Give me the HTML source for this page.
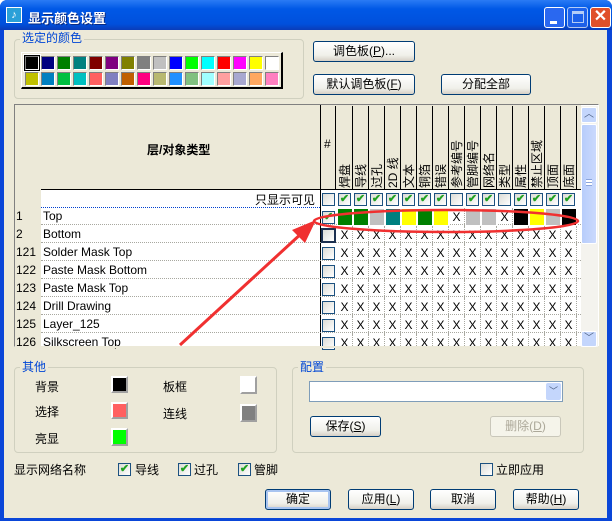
<!DOCTYPE html>
<html><head><meta charset="utf-8"><style>
*{margin:0;padding:0;box-sizing:border-box}
body{width:614px;height:523px;overflow:hidden;background:#fff;font-family:"Liberation Sans","Noto Sans CJK SC",sans-serif;font-size:12px;color:#000;position:relative;white-space:nowrap}
.a{position:absolute}
.win{left:0;top:0;width:612px;height:521px;background:#0a46d8;border-radius:7px 7px 0 0}
.title{left:0;top:0;width:612px;height:30px;background:linear-gradient(#2a7bf5,#0058e6 30%,#0050dc 80%,#0a3cb8);border-radius:7px 7px 0 0}
.client{left:4px;top:30px;width:603px;height:488px;background:#ece9d8}
.grp{border:1px solid #d0d0bf;border-radius:4px}
.glab{background:#ece9d8;color:#0046d5;padding:0 2px;font-size:12px;line-height:13px}
.btn{border:1px solid #003c74;border-radius:3px;background:linear-gradient(#fff,#f0f0ea 70%,#d6d0c5);text-align:center;line-height:18px;font-size:12px}
.sw{width:14px;height:14px;border:1px solid #808080;border-right-color:#fff;border-bottom-color:#fff}
.row{position:absolute;left:41px;height:18px;border-bottom:1px dotted #a8a8a0;width:540px}
.n{position:absolute;left:16px;font-size:12px;line-height:18px}
.t{position:absolute;left:43px;font-size:12px;line-height:18px}
.cb{position:absolute;width:13px;height:13px;border:1px solid #1c5180;background:linear-gradient(135deg,#dcdcd6,#fff);font-size:11px;color:#21a121;line-height:11px;text-align:center;font-weight:bold}
.cells{position:absolute;left:337px;display:flex}
.cells span{width:16px;height:18px;border-right:1px dotted #a8a8a0;text-align:center;line-height:18px;font-size:12px}
.vh{position:absolute;top:106px;width:16px;height:84px;border-right:1px solid #000}
.vh span{position:absolute;left:50%;bottom:2px;transform-origin:0 100%;transform:rotate(-90deg) translate(0,6px);white-space:nowrap;font-size:12px;line-height:12px}
</style></head><body>
<div class="a win"></div>
<div class="a title"></div>
<div class="a" style="left:6px;top:7px;width:16px;height:16px;background:#2aa0d8;border:1px solid #fff;color:#fff;font-size:11px;line-height:14px;text-align:center;font-weight:bold">♪</div>
<div class="a" style="left:28px;top:8px;color:#fff;font-size:13px;font-weight:bold;text-shadow:1px 1px #0a2a80">显示颜色设置</div>
<div class="a" style="left:544px;top:7px;width:21px;height:21px;border:1px solid #fff;border-radius:3px;background:#2a68f0"><div class="a" style="left:5px;top:13px;width:7px;height:3px;background:#fff"></div></div>
<div class="a" style="left:567px;top:7px;width:21px;height:21px;border:1px solid #fff;border-radius:3px;background:#2a68f0;opacity:.7"><div class="a" style="left:4px;top:3px;width:12px;height:12px;border:1px solid #fff;border-top-width:3px"></div></div>
<div class="a" style="left:590px;top:7px;width:21px;height:21px;border:1px solid #fff;border-radius:3px;background:#e0502a;color:#fff;font-size:16px;line-height:18px;text-align:center;font-weight:bold">✕</div>
<div class="a client"></div>

<div class="a grp" style="left:14px;top:39px;width:290px;height:60px"></div>
<div class="a glab" style="left:20px;top:32px">选定的颜色</div>
<div class="a" style="left:21px;top:52px;width:262px;height:37px;background:#ece9d8;border:1px solid #fff;border-right:2px solid #000;border-bottom:2px solid #000"></div>
<div class="a" style="left:24px;top:55px;width:16px;height:16px;border:1px solid #000;background:#000;outline:1px solid #fff"></div>
<div class="a" style="left:25px;top:56px;display:grid;grid-template-columns:repeat(16,14px);column-gap:2px;row-gap:2px">
<div class="sw" style="background:#000"></div><div class="sw" style="background:#000080"></div><div class="sw" style="background:#008000"></div><div class="sw" style="background:#008080"></div><div class="sw" style="background:#800000"></div><div class="sw" style="background:#800080"></div><div class="sw" style="background:#808000"></div><div class="sw" style="background:#808080"></div><div class="sw" style="background:#c0c0c0"></div><div class="sw" style="background:#0000ff"></div><div class="sw" style="background:#00ff00"></div><div class="sw" style="background:#00ffff"></div><div class="sw" style="background:#ff0000"></div><div class="sw" style="background:#ff00ff"></div><div class="sw" style="background:#ffff00"></div><div class="sw" style="background:#fff"></div>
<div class="sw" style="background:#c0c000"></div><div class="sw" style="background:#0080c0"></div><div class="sw" style="background:#00c040"></div><div class="sw" style="background:#00c0c0"></div><div class="sw" style="background:#ff6060"></div><div class="sw" style="background:#8080c0"></div><div class="sw" style="background:#c06000"></div><div class="sw" style="background:#ff0080"></div><div class="sw" style="background:#b8b870"></div><div class="sw" style="background:#2090ff"></div><div class="sw" style="background:#80c080"></div><div class="sw" style="background:#a0ffff"></div><div class="sw" style="background:#ffa0a0"></div><div class="sw" style="background:#a8a8d0"></div><div class="sw" style="background:#ffa860"></div><div class="sw" style="background:#ff80c0"></div>
</div>

<div class="a btn" style="left:313px;top:41px;width:102px;height:21px">调色板(<u>P</u>)...</div>
<div class="a btn" style="left:313px;top:74px;width:102px;height:21px">默认调色板(<u>F</u>)</div>
<div class="a btn" style="left:441px;top:74px;width:90px;height:21px">分配全部</div>

<!-- grid -->
<div class="a" style="left:14px;top:104px;width:585px;height:243px;border:1px solid #808080;border-right-color:#fff;border-bottom-color:#fff;background:#fff"></div>
<div class="a" style="left:15px;top:105px;width:26px;height:241px;background:#ece9d8"></div>
<div class="a" style="left:41px;top:105px;width:540px;height:85px;background:#ece9d8;border-bottom:1px solid #000"></div>
<div class="a" style="left:147px;top:141px;font-weight:bold;font-size:12px">层/对象类型</div>
<div class="a" style="left:320px;top:105px;width:1px;height:241px;background:#000"></div>
<div class="vh" style="left:320px"><span style="transform:none;left:4px;bottom:40px">#</span></div>
<div class="vh" style="left:337px"><span>焊盘</span></div>
<div class="vh" style="left:353px"><span>导线</span></div>
<div class="vh" style="left:369px"><span>过孔</span></div>
<div class="vh" style="left:385px"><span>2D 线</span></div>
<div class="vh" style="left:401px"><span>文本</span></div>
<div class="vh" style="left:417px"><span>铜箔</span></div>
<div class="vh" style="left:433px"><span>错误</span></div>
<div class="vh" style="left:449px"><span>参考编号</span></div>
<div class="vh" style="left:465px"><span>管脚编号</span></div>
<div class="vh" style="left:481px"><span>网络名</span></div>
<div class="vh" style="left:497px"><span>类型</span></div>
<div class="vh" style="left:513px"><span>属性</span></div>
<div class="vh" style="left:529px"><span>禁止区域</span></div>
<div class="vh" style="left:545px"><span>顶面</span></div>
<div class="vh" style="left:561px"><span>底面</span></div>

<div class="a" style="left:255px;top:191px">只显示可见</div>
<div class="a" style="left:41px;top:207px;width:279px;border-top:1px dotted #0040d0"></div>
<div class="cb" style="left:322px;top:193px"></div>
<div class="cb" style="left:338px;top:193px">✔</div><div class="cb" style="left:354px;top:193px">✔</div><div class="cb" style="left:370px;top:193px">✔</div><div class="cb" style="left:386px;top:193px">✔</div><div class="cb" style="left:402px;top:193px">✔</div><div class="cb" style="left:418px;top:193px">✔</div><div class="cb" style="left:434px;top:193px">✔</div><div class="cb" style="left:450px;top:193px"></div><div class="cb" style="left:466px;top:193px">✔</div><div class="cb" style="left:482px;top:193px">✔</div><div class="cb" style="left:498px;top:193px"></div><div class="cb" style="left:514px;top:193px">✔</div><div class="cb" style="left:530px;top:193px">✔</div><div class="cb" style="left:546px;top:193px">✔</div><div class="cb" style="left:562px;top:193px">✔</div>

<div class="row" style="top:207px"></div><div class="row" style="top:225px"></div><div class="row" style="top:243px"></div><div class="row" style="top:261px"></div><div class="row" style="top:279px"></div><div class="row" style="top:297px"></div><div class="row" style="top:315px"></div>
<div class="n" style="top:207px">1</div><div class="t" style="top:207px">Top</div>
<div class="n" style="top:225px">2</div><div class="t" style="top:225px">Bottom</div>
<div class="n" style="top:243px">121</div><div class="t" style="top:243px">Solder Mask Top</div>
<div class="n" style="top:261px">122</div><div class="t" style="top:261px">Paste Mask Bottom</div>
<div class="n" style="top:279px">123</div><div class="t" style="top:279px">Paste Mask Top</div>
<div class="n" style="top:297px">124</div><div class="t" style="top:297px">Drill Drawing</div>
<div class="n" style="top:315px">125</div><div class="t" style="top:315px">Layer_125</div>
<div class="n" style="top:333px">126</div><div class="t" style="top:333px">Silkscreen Top</div>

<div class="cb" style="left:322px;top:211px">✔</div>
<div class="cells" style="top:208px"><span style="background:#008000;border:1px solid #fff"></span><span style="background:#008000;border:1px solid #fff"></span><span style="background:#c0c0c0;border:1px solid #fff"></span><span style="background:#008080;border:1px solid #fff"></span><span style="background:#ffff00;border:1px solid #fff"></span><span style="background:#008000;border:1px solid #fff"></span><span style="background:#ffff00;border:1px solid #fff"></span><span>X</span><span style="background:#c0c0c0;border:1px solid #fff"></span><span style="background:#c0c0c0;border:1px solid #fff"></span><span>X</span><span style="background:#000;border:1px solid #fff"></span><span style="background:#ffff00;border:1px solid #fff"></span><span style="background:#c0c0c0;border:1px solid #fff"></span><span style="background:#000;border:1px solid #fff"></span></div>

<div class="cb" style="left:321px;top:228px;width:15px;height:15px;border:2px solid #1c3050"></div>
<div class="cells" style="top:226px"><span>X</span><span>X</span><span>X</span><span>X</span><span>X</span><span>X</span><span>X</span><span>X</span><span>X</span><span>X</span><span>X</span><span>X</span><span>X</span><span>X</span><span>X</span></div>
<div class="cb" style="left:322px;top:247px"></div>
<div class="cells" style="top:244px"><span>X</span><span>X</span><span>X</span><span>X</span><span>X</span><span>X</span><span>X</span><span>X</span><span>X</span><span>X</span><span>X</span><span>X</span><span>X</span><span>X</span><span>X</span></div>
<div class="cb" style="left:322px;top:265px"></div>
<div class="cells" style="top:262px"><span>X</span><span>X</span><span>X</span><span>X</span><span>X</span><span>X</span><span>X</span><span>X</span><span>X</span><span>X</span><span>X</span><span>X</span><span>X</span><span>X</span><span>X</span></div>
<div class="cb" style="left:322px;top:283px"></div>
<div class="cells" style="top:280px"><span>X</span><span>X</span><span>X</span><span>X</span><span>X</span><span>X</span><span>X</span><span>X</span><span>X</span><span>X</span><span>X</span><span>X</span><span>X</span><span>X</span><span>X</span></div>
<div class="cb" style="left:322px;top:301px"></div>
<div class="cells" style="top:298px"><span>X</span><span>X</span><span>X</span><span>X</span><span>X</span><span>X</span><span>X</span><span>X</span><span>X</span><span>X</span><span>X</span><span>X</span><span>X</span><span>X</span><span>X</span></div>
<div class="cb" style="left:322px;top:319px"></div>
<div class="cells" style="top:316px"><span>X</span><span>X</span><span>X</span><span>X</span><span>X</span><span>X</span><span>X</span><span>X</span><span>X</span><span>X</span><span>X</span><span>X</span><span>X</span><span>X</span><span>X</span></div>
<div class="cb" style="left:322px;top:337px"></div>
<div class="cells" style="top:334px;height:12px;overflow:hidden"><span>X</span><span>X</span><span>X</span><span>X</span><span>X</span><span>X</span><span>X</span><span>X</span><span>X</span><span>X</span><span>X</span><span>X</span><span>X</span><span>X</span><span>X</span></div>
<div class="a" style="left:15px;top:346px;width:584px;height:2px;background:#ece9d8"></div>

<!-- scrollbar -->
<div class="a" style="left:581px;top:106px;width:17px;height:241px;background:#f4f3ee"></div>
<div class="a" style="left:581px;top:107px;width:16px;height:16px;background:#c4d6fc;border:1px solid #fff;border-radius:2px;color:#4d6185;font-size:10px;text-align:center;line-height:14px">︿</div>
<div class="a" style="left:581px;top:124px;width:16px;height:120px;background:linear-gradient(90deg,#b8cdfb,#cad9fd);border:1px solid #fff;border-radius:2px"><div class="a" style="left:4px;top:54px;width:6px;height:7px;border-top:1px solid #8aa4dc;border-bottom:1px solid #8aa4dc;background:linear-gradient(#fff 0 2px,#8aa4dc 2px 3px,#fff 3px)"></div></div>
<div class="a" style="left:581px;top:331px;width:16px;height:16px;background:#c4d6fc;border:1px solid #fff;border-radius:2px;color:#4d6185;font-size:10px;text-align:center;line-height:14px">﹀</div>

<!-- 其他 -->
<div class="a grp" style="left:14px;top:367px;width:263px;height:86px"></div>
<div class="a glab" style="left:20px;top:361px">其他</div>
<div class="a" style="left:35px;top:378px">背景</div>
<div class="a" style="left:35px;top:403px">选择</div>
<div class="a" style="left:35px;top:430px">亮显</div>
<div class="a" style="left:163px;top:378px">板框</div>
<div class="a" style="left:163px;top:405px">连线</div>
<div class="a" style="left:111px;top:376px;width:17px;height:17px;background:#000;border:2px solid #fff;border-right-color:#a0a0a0;border-bottom-color:#a0a0a0"></div>
<div class="a" style="left:111px;top:402px;width:17px;height:17px;background:#ff6060;border:2px solid #fff;border-right-color:#a0a0a0;border-bottom-color:#a0a0a0"></div>
<div class="a" style="left:111px;top:428px;width:17px;height:18px;background:#00ff00;border:2px solid #fff;border-right-color:#a0a0a0;border-bottom-color:#a0a0a0"></div>
<div class="a" style="left:240px;top:376px;width:17px;height:18px;background:#fff;border:2px solid #fff;border-right-color:#a0a0a0;border-bottom-color:#a0a0a0"></div>
<div class="a" style="left:240px;top:404px;width:17px;height:18px;background:#808080;border:2px solid #fff;border-right-color:#a0a0a0;border-bottom-color:#a0a0a0"></div>

<!-- 配置 -->
<div class="a grp" style="left:292px;top:367px;width:292px;height:86px"></div>
<div class="a glab" style="left:298px;top:361px">配置</div>
<div class="a" style="left:309px;top:381px;width:254px;height:21px;background:#fff;border:1px solid #7f9db9"><div class="a" style="right:1px;top:1px;width:15px;height:17px;background:#c4d6fc;border-radius:2px;color:#4d6185;font-size:9px;text-align:center;line-height:17px">﹀</div></div>
<div class="a btn" style="left:310px;top:416px;width:71px;height:21px">保存(<u>S</u>)</div>
<div class="a btn" style="left:490px;top:416px;width:71px;height:21px;border-color:#c9c7ba;color:#aca899;background:#f5f4ea">删除(<u>D</u>)</div>

<div class="a" style="left:14px;top:461px">显示网络名称</div>
<div class="cb" style="left:118px;top:463px">✔</div><div class="a" style="left:135px;top:461px">导线</div>
<div class="cb" style="left:178px;top:463px">✔</div><div class="a" style="left:194px;top:461px">过孔</div>
<div class="cb" style="left:238px;top:463px">✔</div><div class="a" style="left:254px;top:461px">管脚</div>
<div class="cb" style="left:480px;top:463px"></div><div class="a" style="left:496px;top:461px">立即应用</div>

<div class="a btn" style="left:265px;top:489px;width:66px;height:21px;border-color:#003c74;box-shadow:inset 0 0 0 2px #a8c4f0">确定</div>
<div class="a btn" style="left:348px;top:489px;width:66px;height:21px">应用(<u>L</u>)</div>
<div class="a btn" style="left:430px;top:489px;width:66px;height:21px">取消</div>
<div class="a btn" style="left:513px;top:489px;width:66px;height:21px">帮助(<u>H</u>)</div>

<!-- annotation -->
<svg class="a" style="left:0;top:0" width="614" height="523">
<ellipse cx="446" cy="221" rx="132" ry="11" fill="none" stroke="#f03030" stroke-width="2.5"/>
<line x1="180" y1="345" x2="303" y2="232" stroke="#f03030" stroke-width="3"/>
<polygon points="316,220 292,230 305,243" fill="#f03030"/>
</svg>
</body></html>
